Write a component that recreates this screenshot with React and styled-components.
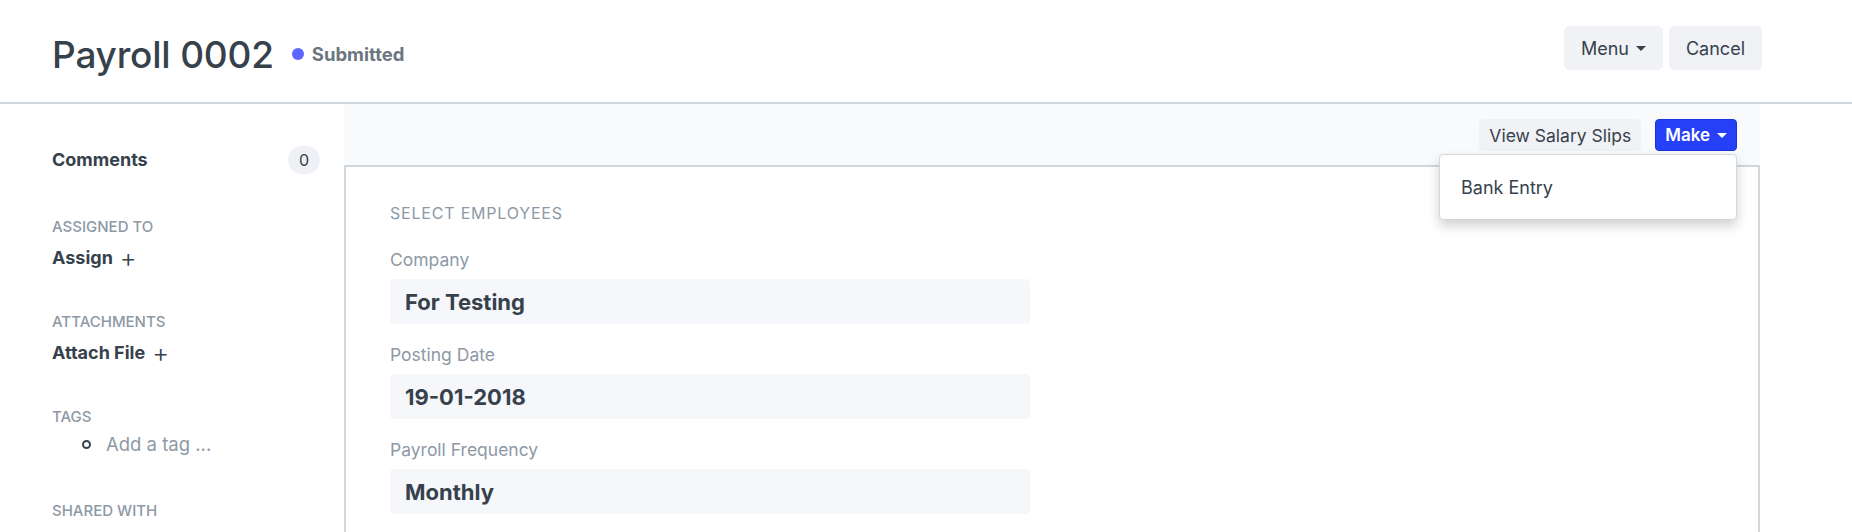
import React from 'react';
import styled, { createGlobalStyle } from 'styled-components';

const GlobalStyle = createGlobalStyle`
  body {
    margin: 0;
    background: #fff;
    font-family: Inter, 'Noto Sans', sans-serif;
    color: #36414c;
  }
`;

const Page = styled.div`
  width: 1852px;
  height: 532px;
  overflow: hidden;
`;

const Header = styled.header`
  display: flex;
  align-items: center;
  justify-content: space-between;
  height: 102px;
  padding: 0 90px 0 52px;
  border-bottom: 2px solid #d1d8dd;
  box-sizing: content-box;
`;

const TitleGroup = styled.div`
  display: flex;
  align-items: center;
  padding-top: 6px;
`;

const Title = styled.h1`
  margin: 0;
  font-size: 37px;
  font-weight: 500;
  color: #36414c;
  letter-spacing: -0.2px;
`;

const Status = styled.span`
  display: flex;
  align-items: center;
  margin-left: 18px;
  font-size: 18.5px;
  font-weight: 700;
  color: #6c7680;

  &::before {
    content: '';
    width: 12px;
    height: 12px;
    border-radius: 50%;
    background: #5e64ff;
    margin-right: 8px;
  }
`;

const Actions = styled.div`
  display: flex;
  gap: 6px;
  margin-bottom: 6px;
`;

const Caret = styled.span`
  display: inline-block;
  width: 0;
  height: 0;
  margin-left: 7px;
  border-left: 5px solid transparent;
  border-right: 5px solid transparent;
  border-top: 5px solid ${p => p.$light ? '#fff' : '#36414c'};
  vertical-align: middle;
`;

const Button = styled.button`
  display: inline-flex;
  align-items: center;
  justify-content: center;
  height: ${p => p.$small ? '32px' : '44px'};
  padding: 0 ${p => p.$small ? '9px' : '16px'};
  font-family: inherit;
  font-size: ${p => p.$primary ? '17px' : p.$small ? '17.5px' : '18px'};
  font-weight: ${p => p.$primary ? 600 : 400};
  color: ${p => p.$primary ? '#fff' : '#36414c'};
  background: ${p => p.$primary ? '#2540f7' : '#f0f2f5'};
  border: 1px solid ${p => p.$primary ? '#1a33e0' : '#f0f2f5'};
  border-radius: ${p => p.$small ? '4px' : '5px'};
  cursor: pointer;
`;

const Body = styled.div`
  display: flex;
  padding-left: 52px;
`;

const Sidebar = styled.aside`
  width: 292px;
  flex-shrink: 0;
  padding-top: 42px;
  box-sizing: border-box;
`;

const SideRow = styled.div`
  display: flex;
  align-items: center;
  justify-content: space-between;
  padding-right: 24px;
  margin-bottom: ${p => p.$mb || 0}px;
`;

const SideTitle = styled.div`
  display: flex;
  align-items: center;
  font-size: 18px;
  font-weight: 700;
  color: #36414c;
  line-height: 24px;
`;

const Plus = styled.span`
  font-size: 26px;
  font-weight: 300;
  margin-left: 7px;
  line-height: 24px;
`;

const Badge = styled.span`
  display: inline-flex;
  align-items: center;
  justify-content: center;
  width: 32px;
  height: 28px;
  border-radius: 14px;
  background: #eef0f3;
  font-size: 16px;
  color: #36414c;
`;

const SideLabel = styled.div`
  font-size: 15px;
  font-weight: 500;
  color: #8d99a6;
  line-height: 20px;
  margin-bottom: ${p => p.$mb ?? 9}px;
`;

const SideSection = styled.div`
  margin-bottom: ${p => p.$mb || 42}px;
`;

const TagList = styled.ul`
  margin: 0;
  padding-left: 30px;
  list-style: none;

  li {
    display: flex;
    align-items: center;
    font-size: 18.5px;
    color: #8d99a6;
    line-height: 22px;
  }

  li::before {
    content: '';
    width: 5px;
    height: 5px;
    border: 2px solid #36414c;
    border-radius: 50%;
    margin-right: 15px;
  }
`;

const Main = styled.main`
  flex: 1;
  margin-right: 92px;
`;

const Toolbar = styled.div`
  position: relative;
  display: flex;
  justify-content: flex-end;
  gap: 14px;
  height: 61px;
  padding: 15px 23px 0 0;
  box-sizing: border-box;
  background: #f9fafb;
`;

const MakeWrap = styled.div`
  position: relative;
`;

const Dropdown = styled.div`
  position: absolute;
  top: 35px;
  right: 0;
  width: 298px;
  height: 66px;
  box-sizing: border-box;
  background: #fff;
  border: 1px solid #d1d8dd;
  border-radius: 4px;
  box-shadow: 0 6px 12px rgba(0, 0, 0, 0.18);
  display: flex;
  align-items: center;
  padding-left: 21px;
  font-size: 18px;
  color: #36414c;
  z-index: 2;
`;

const Card = styled.section`
  border: 2px solid #d1d8dd;
  border-bottom: none;
  padding: 36px 44px 0;
  height: 400px;
`;

const SectionHead = styled.div`
  font-size: 16px;
  color: #8d99a6;
  letter-spacing: 0.8px;
  line-height: 20px;
  margin-bottom: 27px;
`;

const Grid = styled.div`
  display: grid;
  grid-template-columns: 640px 1fr;
`;

const Field = styled.div`
  margin-bottom: 21px;
`;

const FieldLabel = styled.div`
  font-size: 17.5px;
  color: #8d99a6;
  line-height: 20px;
  margin-bottom: 9px;
`;

const FieldValue = styled.div`
  height: 45px;
  display: flex;
  align-items: center;
  padding-left: 15px;
  background: #f5f7fa;
  border-radius: 4px;
  font-size: 22px;
  font-weight: 700;
  color: #36414c;
`;

const fields = [
  { label: 'Company', value: 'For Testing' },
  { label: 'Posting Date', value: '19-01-2018' },
  { label: 'Payroll Frequency', value: 'Monthly' },
];

export default function App() {
  return (
    <Page>
      <GlobalStyle />
      <Header>
        <TitleGroup>
          <Title>Payroll 0002</Title>
          <Status>Submitted</Status>
        </TitleGroup>
        <Actions>
          <Button>Menu<Caret /></Button>
          <Button>Cancel</Button>
        </Actions>
      </Header>
      <Body>
        <Sidebar>
          <SideRow $mb={43}>
            <SideTitle>Comments</SideTitle>
            <Badge>0</Badge>
          </SideRow>
          <SideSection>
            <SideLabel>ASSIGNED TO</SideLabel>
            <SideTitle>Assign<Plus>+</Plus></SideTitle>
          </SideSection>
          <SideSection>
            <SideLabel>ATTACHMENTS</SideLabel>
            <SideTitle>Attach File<Plus>+</Plus></SideTitle>
          </SideSection>
          <SideSection $mb={46}>
            <SideLabel $mb={6}>TAGS</SideLabel>
            <TagList>
              <li>Add a tag ...</li>
            </TagList>
          </SideSection>
          <SideLabel>SHARED WITH</SideLabel>
        </Sidebar>
        <Main>
          <Toolbar>
            <Button $small>View Salary Slips</Button>
            <MakeWrap>
              <Button $small $primary>Make<Caret $light /></Button>
              <Dropdown>Bank Entry</Dropdown>
            </MakeWrap>
          </Toolbar>
          <Card>
            <SectionHead>SELECT EMPLOYEES</SectionHead>
            <Grid>
              <div>
                {fields.map(f => (
                  <Field key={f.label}>
                    <FieldLabel>{f.label}</FieldLabel>
                    <FieldValue>{f.value}</FieldValue>
                  </Field>
                ))}
              </div>
              <div />
            </Grid>
          </Card>
        </Main>
      </Body>
    </Page>
  );
}
